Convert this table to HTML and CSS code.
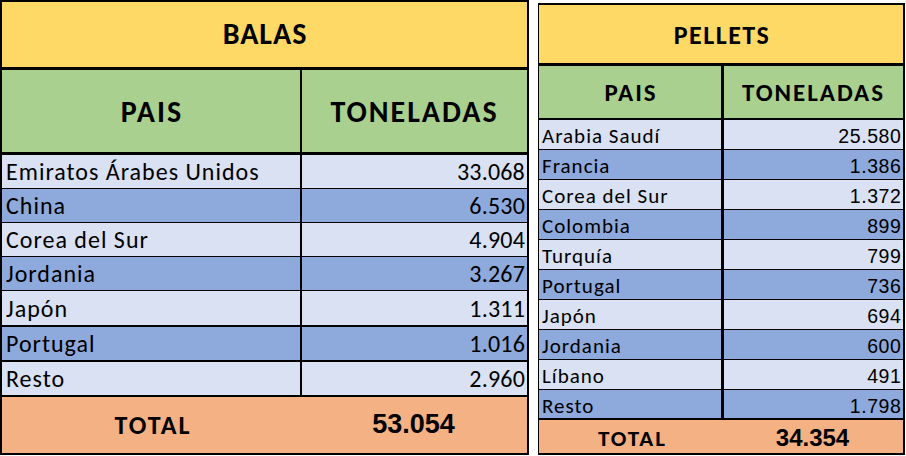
FILE: index.html
```html
<!DOCTYPE html>
<html lang="es">
<head>
<meta charset="utf-8">
<title>Balas y Pellets</title>
<link rel="stylesheet" href="styles.css">
</head>
<body>
<div class="page">
  <div class="tbl balas">
    <div class="title">BALAS</div>
    <div class="row head">
      <div class="c1">PAIS</div>
      <div class="c2">TONELADAS</div>
    </div>
    <div class="row light h34"><div class="c1">Emiratos Árabes Unidos</div><div class="c2 num">33.068</div></div>
    <div class="row dark h34"><div class="c1">China</div><div class="c2 num">6.530</div></div>
    <div class="row light h34"><div class="c1">Corea del Sur</div><div class="c2 num">4.904</div></div>
    <div class="row dark h34"><div class="c1">Jordania</div><div class="c2 num">3.267</div></div>
    <div class="row light h36 thick"><div class="c1">Japón</div><div class="c2 num">1.311</div></div>
    <div class="row dark h35 thick"><div class="c1">Portugal</div><div class="c2 num">1.016</div></div>
    <div class="row light h35 thick"><div class="c1">Resto</div><div class="c2 num">2.960</div></div>
    <div class="row total">
      <div class="c1">TOTAL</div>
      <div class="c2 tnum">53.054</div>
    </div>
  </div>

  <div class="tbl pellets">
    <div class="title">PELLETS</div>
    <div class="row head">
      <div class="c1">PAIS</div>
      <div class="c2">TONELADAS</div>
    </div>
    <div class="row light"><div class="c1">Arabia Saudí</div><div class="c2 num">25.580</div></div>
    <div class="row dark"><div class="c1">Francia</div><div class="c2 num">1.386</div></div>
    <div class="row light"><div class="c1">Corea del Sur</div><div class="c2 num">1.372</div></div>
    <div class="row dark"><div class="c1">Colombia</div><div class="c2 num">899</div></div>
    <div class="row light"><div class="c1">Turquía</div><div class="c2 num">799</div></div>
    <div class="row dark"><div class="c1">Portugal</div><div class="c2 num">736</div></div>
    <div class="row light"><div class="c1">Japón</div><div class="c2 num">694</div></div>
    <div class="row dark"><div class="c1">Jordania</div><div class="c2 num">600</div></div>
    <div class="row light"><div class="c1">Líbano</div><div class="c2 num">491</div></div>
    <div class="row dark last"><div class="c1">Resto</div><div class="c2 num">1.798</div></div>
    <div class="row total">
      <div class="c1">TOTAL</div>
      <div class="c2 tnum">34.354</div>
    </div>
  </div>
</div>
</body>
</html>
```

FILE: styles.css
```css
* { box-sizing: border-box; }
html, body { margin: 0; padding: 0; background: #ffffff; }
body {
  font-family: Carlito, Calibri, Lato, "Liberation Sans", sans-serif;
  color: #000;
  width: 906px;
  height: 456px;
  overflow: hidden;
}
.page {
  display: flex;
  align-items: flex-start;
  gap: 9px;
}
.tbl {
  display: flex;
  flex-direction: column;
  border: 2px solid #000;
}
.title {
  background: #FFD966;
  font-weight: 700;
  display: flex;
  align-items: center;
  justify-content: center;
}
.row {
  display: flex;
  border-bottom: 1px solid #000;
}
.row .c1, .row .c2 {
  display: flex;
  align-items: center;
  white-space: nowrap;
}
.head { background: #A9D08E; font-weight: 700; }
.head .c1, .head .c2 { justify-content: center; }
.light { background: #D9E1F2; }
.dark { background: #8EA9DB; }
.num { justify-content: flex-end; }
.total {
  background: #F4B183;
  font-weight: 700;
  border-bottom: none;
}
.total .c1, .total .c2 { justify-content: center; border-right: none !important; }
.tnum { font-family: "Liberation Sans", Arial, sans-serif; }

/* BALAS */
.balas { width: 529px; height: 455px; }
.balas .title { height: 68px; border-bottom: 3px solid #000; font-size: 30px; letter-spacing: 1px; padding-bottom: 2px; padding-left: 1px; }
.balas .head { height: 85px; border-bottom: 3px solid #000; font-size: 30px; letter-spacing: 2px; }
.balas .head .c1, .balas .head .c2 { padding-left: 2px; }
.balas .c1 { width: 300px; border-right: 2px solid #000; padding-left: 4px; }
.balas .c2 { flex: 1; padding-right: 2px; }
.balas .row:not(.head):not(.total) { font-size: 24px; letter-spacing: 1px; }
.balas .row .num { letter-spacing: 0.2px; }
.balas .h34 { height: 34px; }
.balas .h35 { height: 35px; }
.balas .h36 { height: 36px; }
.balas .thick { border-bottom-width: 2px; }
.balas .total { flex: 1; }
.balas .total .c1 { font-size: 26px; letter-spacing: 2px; padding-left: 2px; }
.balas .total .c2 { font-size: 27px; padding-bottom: 2px; }

/* PELLETS */
.pellets { width: 367px; height: 452px; margin-top: 3px; border-left-width: 1px; }
.pellets .title { height: 61px; border-bottom: 3px solid #000; font-size: 26px; letter-spacing: 1.5px; padding-top: 2px; padding-left: 2px; }
.pellets .head { height: 54px; border-bottom: 2px solid #000; font-size: 25px; letter-spacing: 2px; }
.pellets .head .c1, .pellets .head .c2 { padding-left: 2px; }
.pellets .c1 { width: 185px; border-right: 3px solid #000; padding-left: 3px; }
.pellets .c2 { flex: 1; padding-right: 2px; }
.pellets .row:not(.head):not(.total) { height: 30px; font-size: 21px; letter-spacing: 1px; border-bottom-width: 1px; }
.pellets .num { font-family: "Liberation Sans", Arial, sans-serif; font-size: 19.5px; letter-spacing: 0.6px !important; padding-top: 4px; padding-right: 1.5px; }
.pellets .row:not(.head):not(.total) .c1 { padding-top: 3px; }
.pellets .last { border-bottom-width: 2px !important; }
.pellets .total { flex: 1; }
.pellets .total .c1 { font-size: 23px; letter-spacing: 2px; padding-left: 2px; padding-top: 3px; }
.pellets .total .c2 { font-size: 24px; padding-top: 2px; }
```
